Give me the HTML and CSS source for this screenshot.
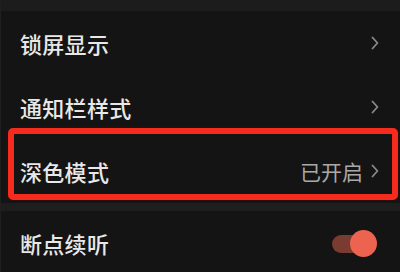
FILE: index.html
```html
<!DOCTYPE html>
<html lang="zh-CN">
<head>
<meta charset="utf-8">
<link rel="stylesheet" href="styles.css">
</head>
<body>
<div class="screen">
  <div class="top-strip"></div>
  <div class="row">
    <span class="label">锁屏显示</span>
    <span class="trail"><svg class="chev" width="8" height="14" viewBox="0 0 8 14"><polyline points="1.5,1.5 6.5,7 1.5,12.5" fill="none" stroke="#8a8a8a" stroke-width="1.8" stroke-linecap="round" stroke-linejoin="round"/></svg></span>
  </div>
  <div class="row">
    <span class="label">通知栏样式</span>
    <span class="trail"><svg class="chev" width="8" height="14" viewBox="0 0 8 14"><polyline points="1.5,1.5 6.5,7 1.5,12.5" fill="none" stroke="#8a8a8a" stroke-width="1.8" stroke-linecap="round" stroke-linejoin="round"/></svg></span>
  </div>
  <div class="row row-marked">
    <span class="label">深色模式</span>
    <span class="trail"><span class="value">已开启</span><svg class="chev" width="8" height="14" viewBox="0 0 8 14"><polyline points="1.5,1.5 6.5,7 1.5,12.5" fill="none" stroke="#8a8a8a" stroke-width="1.8" stroke-linecap="round" stroke-linejoin="round"/></svg></span>
    <div class="highlight"></div>
  </div>
  <div class="divider"></div>
  <div class="row row-toggle">
    <span class="label">断点续听</span>
    <span class="toggle"><span class="track"></span><span class="knob"></span></span>
  </div>
</div>
</body>
</html>
```
FILE: styles.css
```css
html, body {
  margin: 0;
  padding: 0;
  background: #141414;
}
.screen {
  width: 400px;
  height: 272px;
  overflow: hidden;
  background: #141414;
  border-left: 1px solid #1f1f1f;
  box-sizing: border-box;
  font-family: "Noto Sans CJK SC", "Noto Sans", sans-serif;
}
.top-strip {
  height: 11px;
  background: #1c1c1c;
}
.row {
  position: relative;
  height: 64px;
  display: flex;
  align-items: center;
  justify-content: space-between;
  padding: 0 21px 0 19px;
}
.label {
  font-size: 22px;
  color: #e8e8e8;
  font-weight: 500;
  letter-spacing: 0.3px;
}
.trail {
  display: flex;
  align-items: center;
  gap: 8px;
}
.value {
  font-size: 21px;
  color: #a9a9a9;
}
.chev {
  display: block;
}
.highlight {
  position: absolute;
  left: 7px;
  right: 2px;
  top: -11px;
  bottom: 3px;
  border: 6px solid #f42b1d;
  border-radius: 5px;
  box-shadow: 0 0 2px rgba(120, 0, 0, 0.8);
}
.divider {
  height: 8px;
  background: #1e1e1e;
}
.row-toggle {
  padding-right: 23px;
}
.toggle {
  position: relative;
  width: 45px;
  height: 27px;
}
.track {
  position: absolute;
  left: 0;
  top: 5px;
  width: 36px;
  height: 18px;
  border-radius: 9px;
  background: #7a3b31;
}
.knob {
  position: absolute;
  right: 0;
  top: 0;
  width: 27px;
  height: 27px;
  border-radius: 50%;
  background: #ec6450;
}
```
